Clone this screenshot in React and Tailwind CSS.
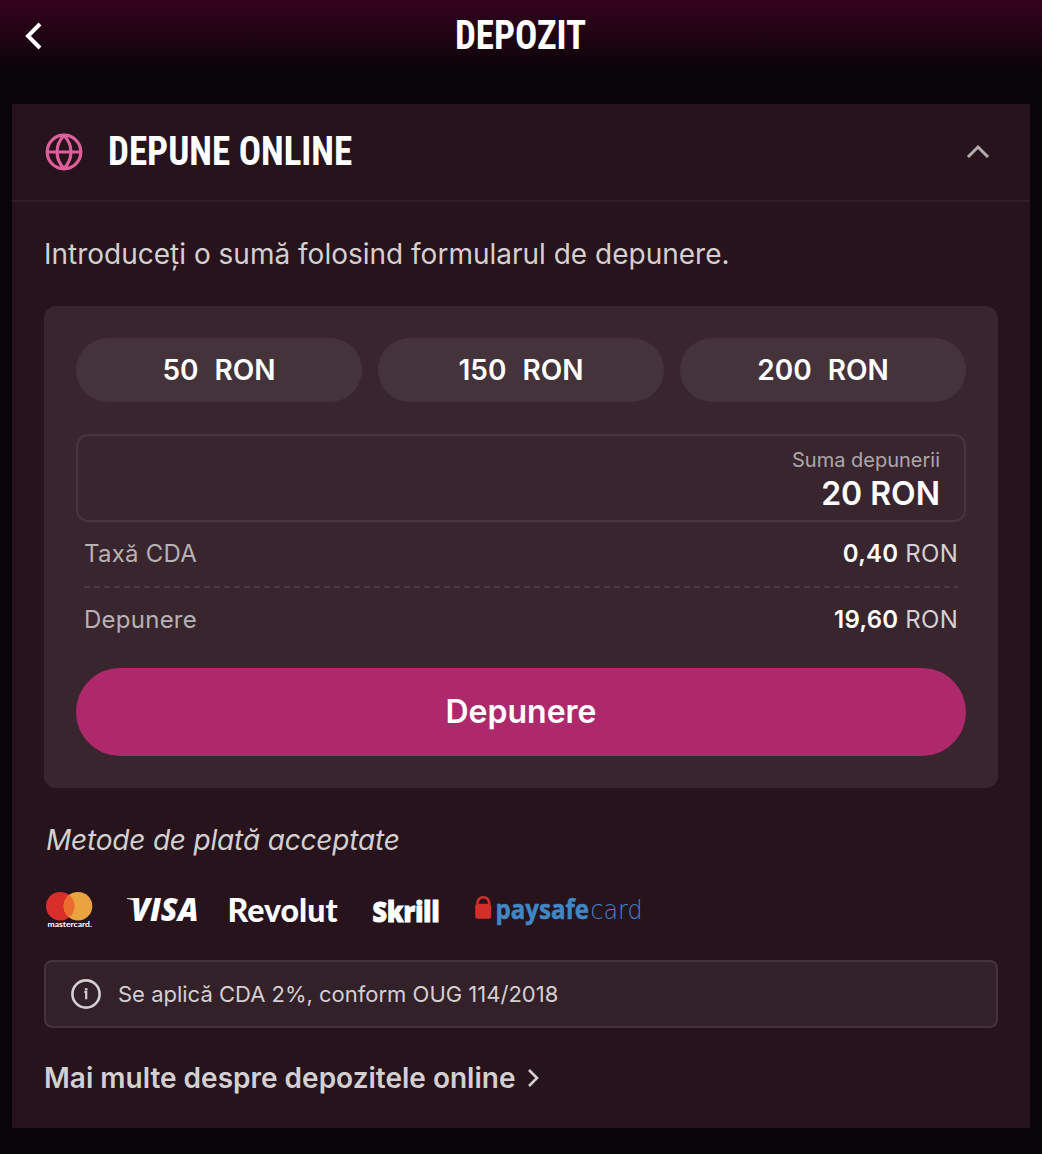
import React, { useState } from 'react'

const amounts = [50, 150, 200];

const fees = [
    { label: 'Taxă CDA', value: '0,40' },
    { label: 'Depunere', value: '19,60' },
];

const GlobeIcon = () => (
    <svg width="38" height="38" viewBox="0 0 38 38" fill="none" stroke="#de5f9b" strokeWidth="3.2">
        <circle cx="19" cy="19" r="16.800" />
        <path d="M19 2.500C9.700 12 9.700 26 19 35.500M19 2.500C28.300 12 28.300 26 19 35.500M2 19h34" />
    </svg>
)

const InfoIcon = () => (
    <svg width="30" height="30" viewBox="0 0 30 30" fill="none">
        <circle cx="15" cy="15" r="13.6" stroke="#d4d0d2" strokeWidth="2.600" />
        <path d="M13.300 13h1.900v7.200M13.800 10.300h2.700" stroke="#d4d0d2" strokeWidth="2.200" />
    </svg>
)

const PaymentLogos = () => (
    <div className="flex h-[40px] items-start">
        <svg className="overflow-visible" width="48" height="40" viewBox="0 0 48 40">
            <circle cx="16.300" cy="16.200" r="14.300" fill="#d92f2c" />
            <circle cx="34" cy="16.200" r="14.300" fill="#eaa341" />
            <path d="M25.100 4.900a14.300 14.300 0 0 1 0 22.600a14.300 14.300 0 0 1 0-22.600Z" fill="#ec6b2f" />
            <text x="3.500" y="37.300" fill="#fff" fontFamily="Lato" fontWeight="700" fontSize="7.300" textLength="44.500" lengthAdjust="spacingAndGlyphs">mastercard.</text>
        </svg>
        <svg className="ml-[34px] overflow-visible" width="74" height="40" viewBox="0 0 74 40" fill="#fff">
            <path d="M1 8.300h8l2 5Q8 9.500 1 9Z" />
            <text x="5" y="30.800" fontFamily="Open Sans" fontStyle="italic" fontWeight="800" fontSize="31" textLength="67.500" lengthAdjust="spacingAndGlyphs">VISA</text>
        </svg>
        <svg className="ml-[26px] overflow-visible" width="118" height="40" viewBox="0 0 118 40">
            <text x="1.500" y="31.500" fill="#fff" fontFamily="Lato" fontWeight="900" fontSize="32" textLength="110" lengthAdjust="spacingAndGlyphs">Revolut</text>
        </svg>
        <svg className="ml-[28px] overflow-visible" width="72" height="40" viewBox="0 0 72 40">
            <text x="0.500" y="31.500" fill="#fff" stroke="#fff" strokeWidth="1" fontFamily="Open Sans" fontWeight="800" fontSize="28" textLength="67" lengthAdjust="spacingAndGlyphs">Skrill</text>
        </svg>
        <svg className="ml-[30px] overflow-visible" width="172" height="40" viewBox="0 0 172 40">
            <path d="M3.200 14C3.700 9.500 6 7.200 9.300 7.200S15 9.500 15.500 14" fill="none" stroke="#d42e2b" strokeWidth="2.600" />
            <rect x="1.200" y="13.700" width="16" height="15" rx="2.500" fill="#d42e2b" />
            <text x="21.500" y="28.700" fill="#3f87c6" stroke="#3f87c6" strokeWidth="0.500" fontFamily="Open Sans" fontWeight="700" fontSize="26" textLength="93.500" lengthAdjust="spacingAndGlyphs">paysafe</text>
            <text x="116.500" y="28.700" fill="#3f87c6" fontFamily="DejaVu Sans" fontWeight="200" fontSize="26" textLength="52" lengthAdjust="spacingAndGlyphs">card</text>
        </svg>
    </div>
)

const App = () => {
    const [amount, setAmount] = useState(20);
    const [open, setOpen] = useState(true);

    return (
        <div className="min-h-[1154px] bg-[#090407] bg-[linear-gradient(180deg,#36031f_0px,#090407_72px)] px-3 pb-[26px] font-['Inter',sans-serif] text-[#d4d0d2]">
            {/* Top bar */}
            <header className="flex h-[104px] items-start pt-[11px]">
                <button className="ml-[12px] mt-[11px]">
                    <svg width="20" height="28" viewBox="0 0 20 28" fill="none" stroke="#fff" strokeWidth="4">
                        <path d="M16 2L4 14l12 12" />
                    </svg>
                </button>
                <h1 className="mr-[33px] flex-1 scale-x-[0.903] text-center font-['Roboto'] text-[41px] font-bold leading-[48px] text-white [font-stretch:75%]">DEPOZIT</h1>
            </header>

            <main className="bg-[#27131b]">
                <button onClick={() => setOpen(!open)} className="flex h-[98px] w-full items-center border-b-2 border-[#321e27] px-[33px] text-left">
                    <GlobeIcon />
                    <h2 className="ml-[25px] flex-1 origin-left scale-x-[0.903] pb-[2px] font-['Roboto'] text-[41px] font-bold leading-[48px] text-white [font-stretch:75%]">DEPUNE ONLINE</h2>
                    <svg className="mr-[7px]" width="24" height="16" viewBox="0 0 24 16" fill="none" stroke="#b3adb0" strokeWidth="3">
                        <path d="M2 13L12 3l10 10" />
                    </svg>
                </button>

                <div className="px-8 pb-[30px] pt-[32px]">
                    <p className="text-[28px] leading-[40px]">Introduceți o sumă folosind formularul de depunere.</p>

                    {/* Deposit form */}
                    <div className="mt-8 h-[482px] rounded-xl bg-[#38252d] p-8">
                        <div className="grid grid-cols-3 gap-4">
                            {amounts.map((value) => (
                                <button key={value} onClick={() => setAmount(value)} className="flex h-16 items-center justify-center gap-4 rounded-full bg-[#44333b] text-[28px] font-semibold text-white">
                                    <span>{value}</span>
                                    <span>RON</span>
                                </button>
                            ))}
                        </div>
                        <div className="mt-8 flex h-[88px] flex-col items-end rounded-xl border-2 border-[#47363e] px-6 pt-[10px]">
                            <span className="text-[20px] leading-[28px] text-[#aea7ab]">Suma depunerii</span>
                            <span className="text-[32px] font-semibold leading-[40px] text-white">{amount} RON</span>
                        </div>
                        <div className="px-2">
                            {fees.map((fee) => (
                                <div key={fee.label} className="group">
                                    <div className="flex h-16 items-center justify-between text-[24px] tracking-[0.25px]">
                                        <span className="text-[#b8b1b5]">{fee.label}</span>
                                        <span><b className="font-semibold text-white">{fee.value}</b> RON</span>
                                    </div>
                                    <div className="h-[2px] bg-[repeating-linear-gradient(90deg,#4a3941_0px,#4a3941_6px,transparent_6px,transparent_10px)] group-last:hidden" />
                                </div>
                            ))}
                        </div>
                        <button className="mt-4 h-[88px] w-full rounded-full bg-[#ad296b] text-[32px] font-semibold text-white">Depunere</button>
                    </div>

                    <p className="mb-[30px] ml-[2px] mt-[32px] text-[28px] italic leading-[40px] tracking-[-0.2px]">Metode de plată acceptate</p>
                    <PaymentLogos />

                    <div className="mt-[30px] flex h-[68px] items-center rounded-lg border-2 border-[#44333b] bg-[#33212a] px-[25px]">
                        <InfoIcon />
                        <span className="ml-[17px] text-[22px]">Se aplică CDA 2%, conform OUG 114/2018</span>
                    </div>

                    <a href="#" className="mt-[30px] flex h-[40px] items-center text-[28px] font-semibold">
                        Mai multe despre depozitele online
                        <svg className="ml-[12px]" width="14" height="20" viewBox="0 0 14 20" fill="none" stroke="#d4d0d2" strokeWidth="2.600">
                            <path d="M2 2l8 8-8 8" />
                        </svg>
                    </a>
                </div>
            </main>
        </div>
    )
}

export default App
